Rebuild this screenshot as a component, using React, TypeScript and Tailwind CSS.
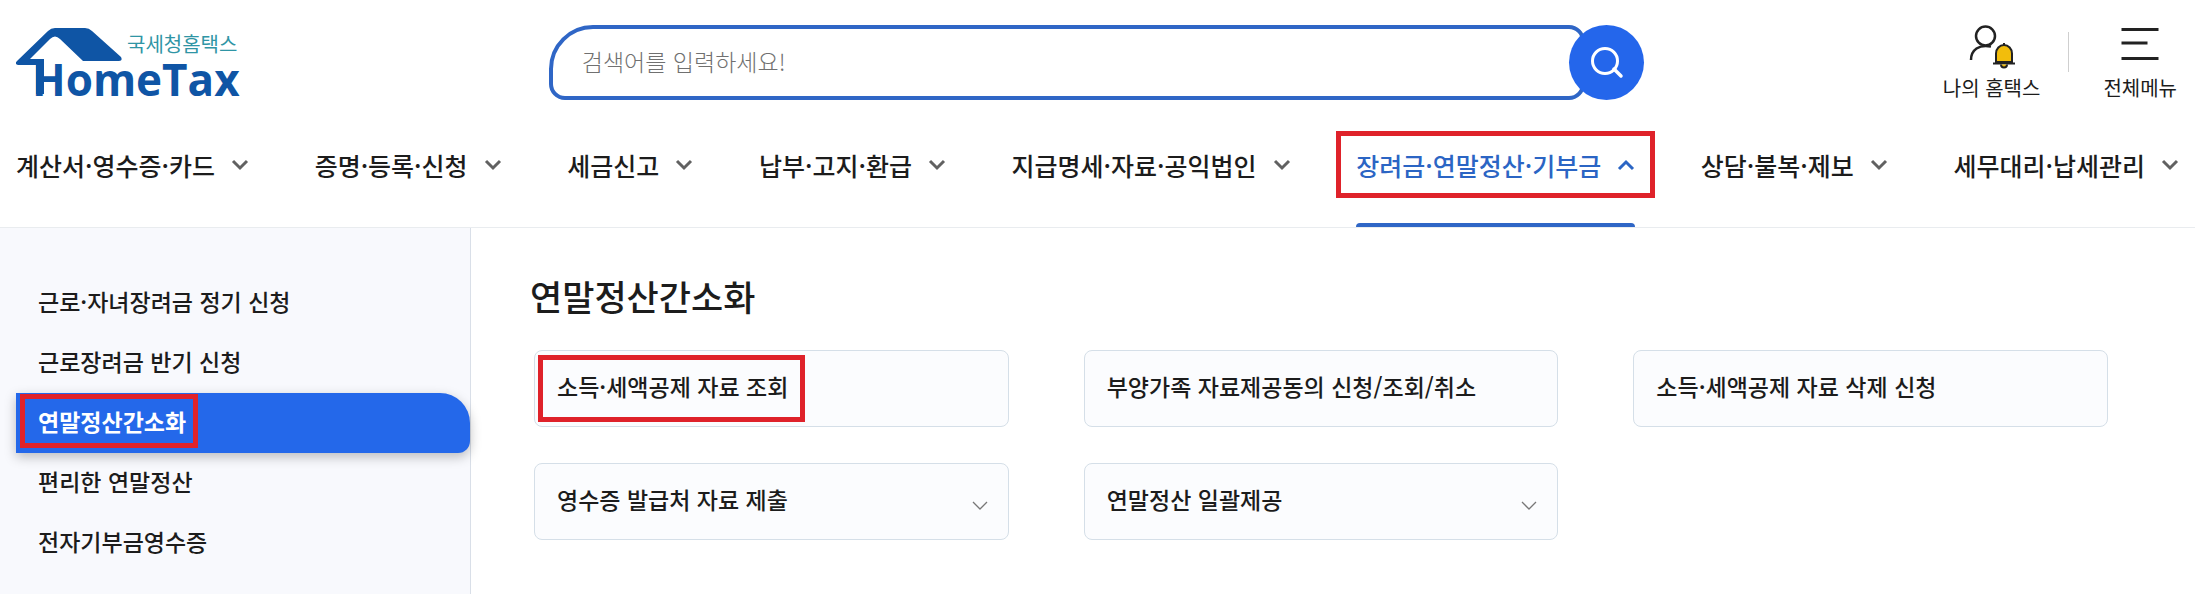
import React from "react";

const navItems = [
  "계산서·영수증·카드",
  "증명·등록·신청",
  "세금신고",
  "납부·고지·환급",
  "지급명세·자료·공익법인",
  "장려금·연말정산·기부금",
  "상담·불복·제보",
  "세무대리·납세관리",
];
const activeNav = "장려금·연말정산·기부금";

const sideItems = [
  "근로·자녀장려금 정기 신청",
  "근로장려금 반기 신청",
  "연말정산간소화",
  "편리한 연말정산",
  "전자기부금영수증",
];
const activeSide = "연말정산간소화";

const cards = [
  { label: "소득·세액공제 자료 조회", marked: true, expandable: false },
  { label: "부양가족 자료제공동의 신청/조회/취소", marked: false, expandable: false },
  { label: "소득·세액공제 자료 삭제 신청", marked: false, expandable: false },
  { label: "영수증 발급처 자료 제출", marked: false, expandable: true },
  { label: "연말정산 일괄제공", marked: false, expandable: true },
];

function Logo() {
  return (
    <a href="#home" className="relative block h-[76px] w-[226px]" aria-label="국세청홈택스 HomeTax">
      <svg viewBox="0 0 226 76" className="absolute inset-0 h-full w-full" aria-hidden="true">
        <path
          d="M39 0H69Q73 0 76 3L105 29Q107 33 103 33H67L44 11Q39 6 34 11L14 31H28V37H2Q-2 36 1 33L32 3Q35 0 39 0Z"
          fill="#0f55a5"
        />
        <path d="M20 32H28V66H20Z" fill="#0f55a5" />
      </svg>
      <span className="absolute left-[111px] top-[4px] whitespace-nowrap text-[20px] leading-6 text-[#2f95a5]">
        국세청홈택스
      </span>
      <span className="absolute left-[16px] top-[29px] whitespace-nowrap font-['Open_Sans'] text-[44px] font-bold leading-[44px] text-[#0f55a5]">
        HomeTax
      </span>
    </a>
  );
}

function Chevron({ up = false }: { up?: boolean }) {
  return (
    <svg viewBox="0 0 18 12" className="h-3 w-[18px]" fill="none" strokeWidth="3" aria-hidden="true">
      <path d={up ? "M2 10L9 3L16 10" : "M2 2L9 9L16 2"} stroke={up ? "#2b65c4" : "#616161"} />
    </svg>
  );
}

export default function App() {
  return (
    <div
      lang="ko"
      className="flex min-h-screen flex-col bg-white font-['Noto_Sans_CJK_KR',sans-serif] text-[#1c1c1c]"
    >
      <header className="border-b border-[#e9ecef]">
        <div className="grid grid-cols-[1fr_2fr_1fr] pt-[25px]">
          <div className="pl-4 pt-[3px]">
            <Logo />
          </div>
          <form role="search" className="flex items-start pr-[2px]" onSubmit={(e) => e.preventDefault()}>
            <input
              type="search"
              aria-label="검색어"
              placeholder="검색어를 입력하세요!"
              className="h-[75px] min-w-0 flex-1 rounded-bl-[16px] rounded-br-[16px] rounded-tl-[44px] rounded-tr-[16px] border-4 border-[#2f66c6] pb-1 pl-[29px] text-[23px] font-light outline-none placeholder:text-[#707070]"
            />
            <button
              type="submit"
              aria-label="검색"
              className="relative -ml-4 flex size-[75px] items-center justify-center rounded-full bg-[#2466eb]"
            >
              <svg viewBox="0 0 34 34" className="size-[34px]" fill="none" stroke="#fff" strokeWidth="3" aria-hidden="true">
                <circle cx="15" cy="15" r="12.5" />
                <path d="M24 23L31 30" strokeWidth="3.5" strokeLinecap="round" />
              </svg>
            </button>
          </form>
          <div className="flex items-start justify-end pr-[18px]">
            <a href="#my" className="flex flex-col items-center">
              <svg viewBox="0 0 48 46" className="h-[46px] w-12" fill="none" stroke="#222" strokeWidth="2.5" aria-hidden="true">
                <circle cx="17.500" cy="11" r="9.500" />
                <path d="M3 35C3 25 11 19 23 21.500" />
                <path d="M28 37V28.500A8 8.500 0 0 1 44 28.500V37Z" fill="#f2bd0c" strokeWidth="2" />
                <path d="M25 38.500H47M36 18V20" strokeWidth="2" />
                <path d="M33 39.500A3 3 0 0 0 39 39.500" fill="#f2bd0c" strokeWidth="2" />
              </svg>
              <span className="text-[20px] leading-[34px]">나의 홈택스</span>
            </a>
            <div className="ml-7 mr-[34px] mt-[7px] h-10 w-px bg-[#cfcfcf]" />
            <button type="button" className="flex flex-col items-center">
              <svg viewBox="0 0 38 46" className="h-[46px] w-[38px]" stroke="#222" strokeWidth="3" aria-hidden="true">
                <path d="M0.500 4.500H37.500M0.500 18H26.500M0.500 33.500H37.500" />
              </svg>
              <span className="text-[20px] leading-[34px]">전체메뉴</span>
            </button>
          </div>
        </div>
        <nav className="flex justify-between px-4 pt-[42px]">
          {navItems.map((item) =>
            item === activeNav ? (
              <a
                key={item}
                href="#menu"
                aria-current="page"
                className="relative flex h-20 items-start gap-4 text-[25px] font-medium leading-[36px] text-[#2b65c4]"
              >
                {item}
                <span className="flex h-9 items-center">
                  <Chevron up />
                </span>
                <span className="absolute inset-x-0 bottom-0 h-1 rounded-t bg-[#2f66c6]" />
                <span className="pointer-events-none absolute -left-5 -right-5 -top-4 h-[67px] border-[5px] border-[#df222a]" />
              </a>
            ) : (
              <a key={item} href="#menu" className="flex h-20 items-start gap-4 text-[25px] font-medium leading-[36px]">
                {item}
                <span className="flex h-9 items-center">
                  <Chevron />
                </span>
              </a>
            ),
          )}
        </nav>
      </header>

      <div className="flex flex-1">
        <aside className="w-[471px] shrink-0 border-r border-[#d9dfe8] bg-[#f8f9fd] pl-4 pt-[45px]">
          <ul>
            {sideItems.map((item) => (
              <li key={item}>
                {item === activeSide ? (
                  <a
                    href="#side"
                    aria-current="page"
                    className="flex h-[60px] items-center rounded-br-[12px] rounded-tr-[30px] bg-[#2468ea] pb-1 pl-1 text-[23px] font-bold text-white shadow-[0_4px_12px_rgba(0,0,0,0.25)]"
                  >
                    <span className="flex h-[54px] items-center border-[5px] border-[#df222a] pl-[13px] pr-[7px]">{item}</span>
                  </a>
                ) : (
                  <a href="#side" className="flex h-[60px] items-center pb-1 pl-[22px] text-[23px] font-medium">
                    {item}
                  </a>
                )}
              </li>
            ))}
          </ul>
        </aside>
        <main className="min-w-0 flex-1 pl-[63px] pr-[87px] pt-[42px]">
          <h1 className="-ml-1 text-[35px] font-medium leading-[52px]">연말정산간소화</h1>
          <div className="mt-7 grid grid-cols-3 gap-x-[75px] gap-y-9">
            {cards.map((card) => (
              <a
                key={card.label}
                href="#card"
                className="relative flex h-[77px] items-center justify-between rounded-lg border border-[#d5dfe8] bg-[#fbfcfe] pb-1 pl-[22px] pr-5 text-[23px] font-medium"
              >
                {card.label}
                {card.expandable && (
                  <svg viewBox="0 0 16 10" className="mt-3 h-[10px] w-4" fill="none" stroke="#777" strokeWidth="1.3" aria-hidden="true">
                    <path d="M1 1L8 8L15 1" />
                  </svg>
                )}
                {card.marked && (
                  <span className="pointer-events-none absolute left-[3px] top-1 h-[67px] w-[267px] border-[5px] border-[#df222a]" />
                )}
              </a>
            ))}
          </div>
        </main>
      </div>
    </div>
  );
}
